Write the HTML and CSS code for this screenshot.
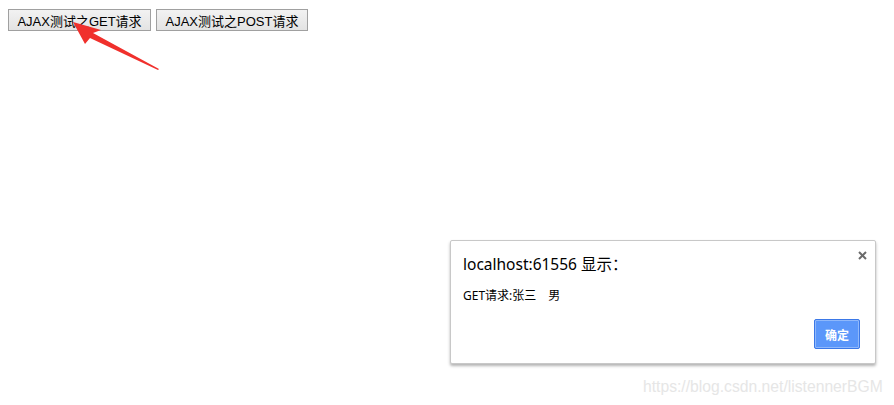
FILE: index.html
```html
<!DOCTYPE html>
<html lang="zh">
<head>
<meta charset="utf-8">
<link rel="stylesheet" href="styles.css">
</head>
<body>
<div class="toolbar">
  <button class="btn">AJAX测试之GET请求</button>
  <button class="btn">AJAX测试之POST请求</button>
</div>
<svg class="arrow" width="100" height="60" viewBox="0 0 100 60">
  <polygon points="2,2 30,10 22,13 88,49 87,50 19,18 14,24" fill="#f0302c"/>
</svg>
<div class="dialog">
  <div class="dialog-title">localhost:61556 显示：</div>
  <svg class="dialog-close" width="9" height="9" viewBox="0 0 9 9">
    <path d="M1 1 L8 8 M8 1 L1 8" stroke="#6b6b6b" stroke-width="2"/>
  </svg>
  <div class="dialog-msg">GET请求:张三　男</div>
  <div class="dialog-actions">
    <button class="ok">确定</button>
  </div>
</div>
<div class="watermark">https://blog.csdn.net/listennerBGM</div>
</body>
</html>
```
FILE: styles.css
```css
html, body {
  margin: 0;
  padding: 0;
  background: #fff;
}
body {
  padding: 9px 8px;
  font-family: "Liberation Sans", "Noto Sans CJK SC", sans-serif;
}
.toolbar {
  display: flex;
  gap: 5px;
}
.btn {
  height: 22px;
  margin: 0;
  padding: 0 6px;
  font-family: "Liberation Sans", "Noto Sans CJK SC", sans-serif;
  font-size: 13px;
  color: #000;
  background: linear-gradient(#f2f2f2, #e3e3e3);
  border: 1px solid #a0a0a0;
  border-radius: 0;
}
.btn:first-child { width: 143px; }
.btn:last-child { width: 152px; }
.arrow {
  position: absolute;
  left: 71px;
  top: 20px;
}
.dialog {
  position: absolute;
  left: 450px;
  top: 240px;
  width: 424px;
  height: 122px;
  background: #fff;
  border: 1px solid #c8c8c8;
  border-radius: 2px;
  box-shadow: 0 2px 3px rgba(0,0,0,0.3);
  font-family: "Noto Sans", "Noto Sans CJK SC", sans-serif;
  color: #000;
}
.dialog-title {
  margin: 12px 0 0 12px;
  font-size: 15.5px;
  line-height: 22px;
}
.dialog-close {
  position: absolute;
  left: 407px;
  top: 10px;
}
.dialog-msg {
  margin: 13px 0 0 12px;
  font-size: 12px;
  line-height: 16px;
}
.dialog-actions {
  display: flex;
  justify-content: flex-end;
  padding: 15px 15px 0 0;
}
.ok {
  width: 46px;
  height: 30px;
  padding: 0;
  background: #5b97fa;
  border: 1px solid #3b78e7;
  border-radius: 2px;
  box-shadow: inset 0 0 0 1px #8fb8fb;
  color: #fff;
  font-weight: bold;
  font-size: 12px;
  font-family: "Noto Sans CJK SC", sans-serif;
}
.watermark {
  position: absolute;
  left: 643px;
  top: 378px;
  font-family: "Liberation Sans", sans-serif;
  font-size: 15.7px;
  color: #e6e6e6;
  white-space: nowrap;
}
```
